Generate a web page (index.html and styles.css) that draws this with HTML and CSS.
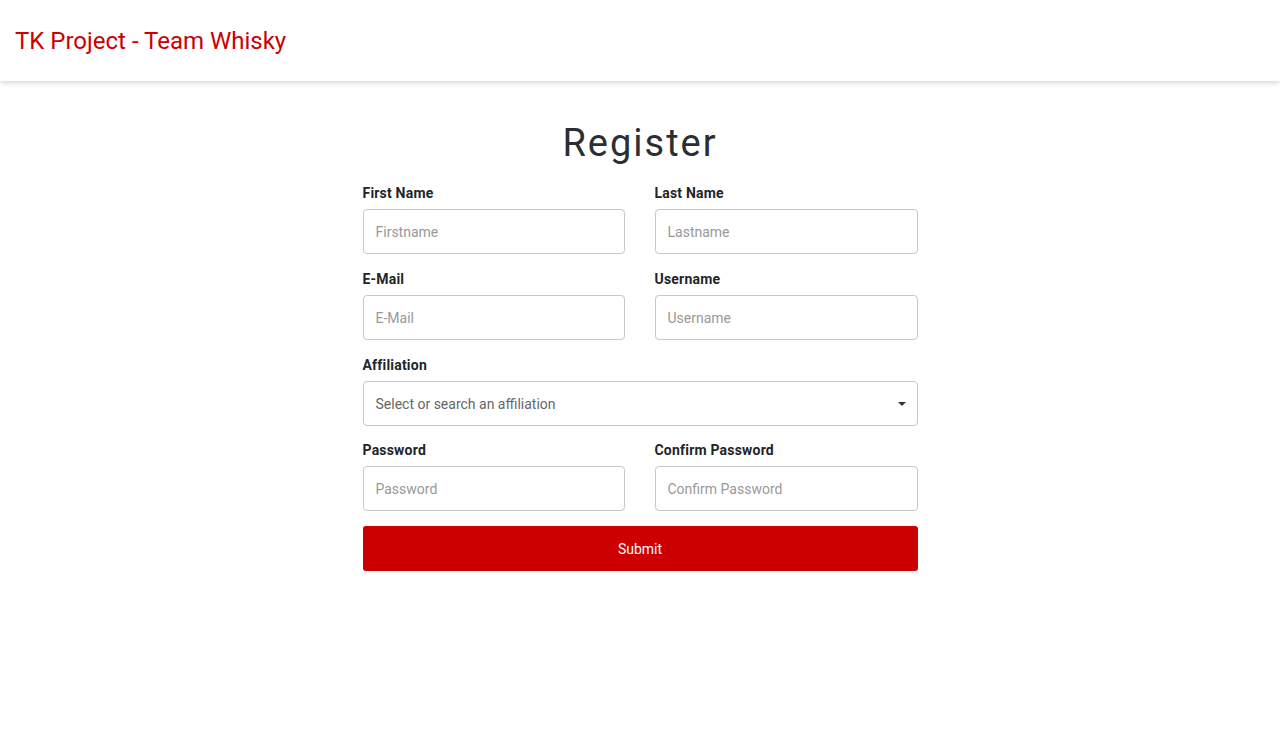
FILE: index.html
```html
<!DOCTYPE html>
<html lang="en">
<head>
<meta charset="utf-8">
<title>Register</title>
<link rel="stylesheet" href="styles.css">
</head>
<body>
<header class="topbar">
  <span class="brand">TK Project - Team Whisky</span>
</header>
<main class="page">
  <form class="register">
    <h1 class="title">Register</h1>
    <div class="row">
      <div class="group">
        <label class="label">First Name</label>
        <input class="input" type="text" placeholder="Firstname">
      </div>
      <div class="group">
        <label class="label">Last Name</label>
        <input class="input" type="text" placeholder="Lastname">
      </div>
    </div>
    <div class="row">
      <div class="group">
        <label class="label">E-Mail</label>
        <input class="input" type="text" placeholder="E-Mail">
      </div>
      <div class="group">
        <label class="label">Username</label>
        <input class="input" type="text" placeholder="Username">
      </div>
    </div>
    <div class="group group-select">
      <label class="label">Affiliation</label>
      <div class="select">
        <span class="select-text">Select or search an affiliation</span>
        <span class="caret"></span>
      </div>
    </div>
    <div class="row">
      <div class="group">
        <label class="label">Password</label>
        <input class="input" type="password" placeholder="Password">
      </div>
      <div class="group">
        <label class="label">Confirm Password</label>
        <input class="input" type="password" placeholder="Confirm Password">
      </div>
    </div>
    <button class="submit" type="button">Submit</button>
  </form>
</main>
</body>
</html>
```
FILE: styles.css
```css
* { box-sizing: border-box; }
html, body { margin: 0; padding: 0; background: #fff; }
body { font-family: Roboto, "Liberation Sans", sans-serif; color: #212529; }

.topbar {
  height: 81px;
  display: flex;
  align-items: center;
  padding: 0 15px;
  background: #fff;
  box-shadow: 0 2px 5px rgba(0, 0, 0, 0.16);
}
.brand {
  font-size: 24px;
  color: #cc0000;
  line-height: 1;
}

.page {
  display: flex;
  justify-content: center;
  padding-top: 40px;
}
.register {
  width: 555px;
  display: flex;
  flex-direction: column;
}
.title {
  margin: 0 0 17px;
  text-align: center;
  font-size: 38px;
  font-weight: 400;
  letter-spacing: 2px;
  line-height: 45px;
  color: #2b2f33;
}
.row {
  display: grid;
  grid-template-columns: 262px 263px;
  column-gap: 30px;
}
.group {
  display: flex;
  flex-direction: column;
  margin-bottom: 15px;
}
.group-select { margin-bottom: 14px; }
.label {
  font-size: 14px;
  font-weight: 700;
  line-height: 20px;
  margin-bottom: 6px;
  letter-spacing: 0.2px;
  color: #212529;
}
.input {
  height: 45px;
  border: 1px solid #c8c8c8;
  border-radius: 4px;
  padding: 0 12px;
  font-family: Roboto, "Liberation Sans", sans-serif;
  font-size: 14px;
  color: #333;
  outline: none;
}
.input::placeholder { color: #999; }

.select {
  height: 45px;
  border: 1px solid #c8c8c8;
  border-radius: 4px;
  padding: 0 11px 0 12px;
  display: flex;
  align-items: center;
  justify-content: space-between;
}
.select-text {
  font-size: 14px;
  color: #666;
}
.caret {
  width: 0;
  height: 0;
  border-left: 4px solid transparent;
  border-right: 4px solid transparent;
  border-top: 4px solid #333;
}

.submit {
  height: 45px;
  border: none;
  border-radius: 3px;
  background: #cc0000;
  color: #fff;
  font-family: Roboto, "Liberation Sans", sans-serif;
  font-size: 14px;
  cursor: pointer;
}
```
